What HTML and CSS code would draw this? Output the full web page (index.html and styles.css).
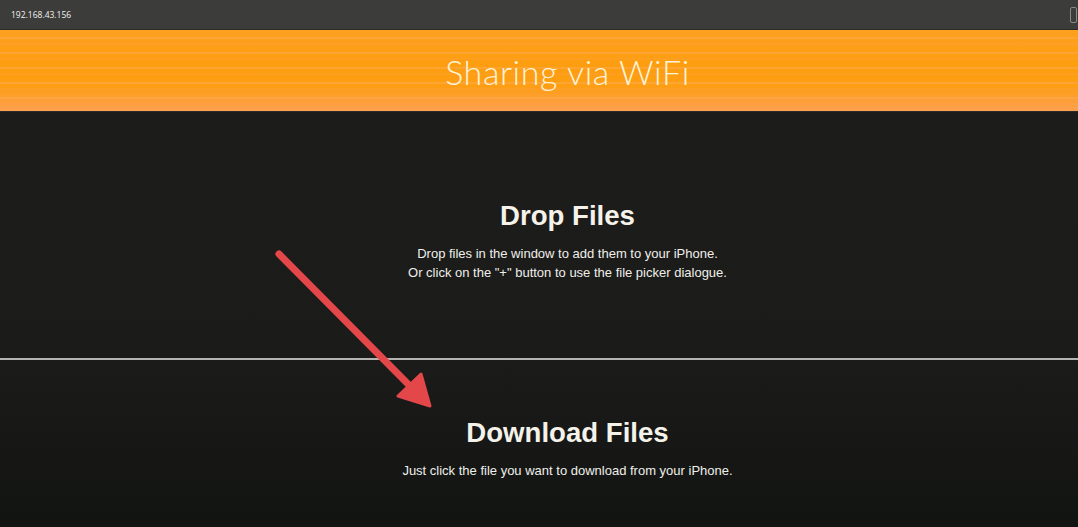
FILE: index.html
```html
<!DOCTYPE html>
<html>
<head>
<meta charset="utf-8">
<link rel="stylesheet" href="styles.css">
</head>
<body>
<div class="topbar">
  <span class="url">192.168.43.156</span>
  <span class="edge"></span>
</div>
<header class="banner">
  <h1 class="title">Sharing via WiFi</h1>
</header>
<main class="content">
  <section class="drop">
    <h2 class="heading">Drop Files</h2>
    <p class="desc">Drop files in the window to add them to your iPhone.<br>Or click on the "+" button to use the file picker dialogue.</p>
  </section>
  <hr class="divider">
  <section class="download">
    <h2 class="heading">Download Files</h2>
    <p class="desc">Just click the file you want to download from your iPhone.</p>
  </section>
  <svg class="arrow" width="1078" height="527" viewBox="0 0 1078 527">
    <line x1="279" y1="254" x2="408" y2="384" stroke="#e4474a" stroke-width="7" stroke-linecap="round"/>
    <polygon points="430,406 398,396 421,374" fill="#e4474a" stroke="#e4474a" stroke-width="3" stroke-linejoin="round"/>
  </svg>
</main>
</body>
</html>
```
FILE: styles.css
```css
html, body {
  margin: 0;
  padding: 0;
}
body {
  background: #1b1b1a;
  font-family: "Liberation Sans", Arial, sans-serif;
  width: 1078px;
  height: 527px;
  overflow: hidden;
  position: relative;
}
.topbar {
  height: 30px;
  background: #3c3c3a;
  border-bottom: 1px solid #2a2c2a;
  display: flex;
  align-items: center;
  padding-left: 11px;
  box-sizing: border-box;
  justify-content: space-between;
}
.url {
  color: #f2f2f0;
  font-family: "Open Sans", sans-serif;
  font-size: 8.5px;
  line-height: 10px;
}
.edge {
  width: 5px;
  height: 14px;
  border: 1px solid #8a8a88;
  border-radius: 2px;
  margin-right: 1px;
}
.banner {
  height: 81px;
  background:
    repeating-linear-gradient(180deg,
      rgba(255,180,110,0) 0px, rgba(255,180,110,0) 7px,
      rgba(255,175,105,0.35) 7px, rgba(255,175,105,0.35) 9px,
      rgba(255,180,110,0) 9px, rgba(255,180,110,0) 13px,
      rgba(255,160,80,0.22) 13px, rgba(255,160,80,0.22) 15px),
    linear-gradient(180deg, #fea021 0%, #fd9e10 40%, #fd9e14 70%, #fda050 100%);
  border-bottom: 1px solid #2a2a28;
  display: flex;
  align-items: center;
  justify-content: center;
  padding-left: 57px;
}
.title {
  margin: 0;
  font-family: "Lato", "Open Sans", sans-serif;
  font-weight: 300;
  font-size: 34px;
  letter-spacing: 0.6px;
  color: #fff3d8;
  position: relative;
  top: 1px;
}
.content {
  background: linear-gradient(180deg, #1c1c1b 0%, #1b1b1a 60%, #121412 100%);
  height: 415px;
}
.drop {
  padding-top: 88px;
  padding-left: 57px;
  height: 246px;
  box-sizing: border-box;
  text-align: center;
}
.heading {
  margin: 0;
  font-size: 27.6px;
  line-height: 32px;
  font-weight: bold;
  color: #f5f2ea;
}
.desc {
  margin: 12px 0 0;
  font-size: 13px;
  line-height: 19px;
  color: #f0efea;
}
.divider {
  margin: 0;
  border: none;
  height: 2px;
  background: #b4b4b2;
}
.download {
  padding-top: 57px;
  padding-left: 57px;
  text-align: center;
}
.arrow {
  position: absolute;
  left: 0;
  top: 0;
  pointer-events: none;
}
```
